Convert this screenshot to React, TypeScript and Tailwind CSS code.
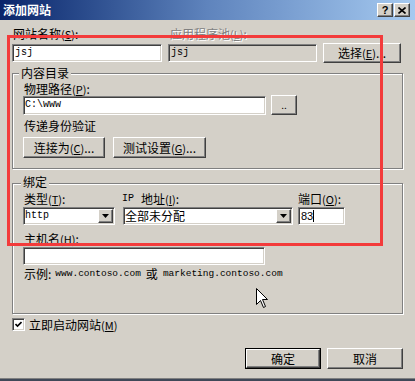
import React from "react";

const sunken =
  "border border-t-[#808080] border-l-[#808080] border-b-white border-r-white shadow-[inset_1px_1px_0_#404040,inset_-1px_-1px_0_#d4d0c8]";
const raised =
  "border border-t-white border-l-white border-b-[#404040] border-r-[#404040] shadow-[inset_-1px_-1px_0_#808080,inset_1px_1px_0_#d4d0c8] bg-[#d4d0c8] flex items-center justify-center";
const etched = "border border-[#808080] shadow-[inset_1px_1px_0_#fff,1px_1px_0_#fff]";
const mono = "font-['Liberation_Mono',monospace]";

function Acc({ k }: { k: string }) {
  return (
    <span className="text-[11px]">
      (<span className="underline">{k}</span>)
    </span>
  );
}

function Arrow() {
  return (
    <div className={`${raised} w-[15px] h-[14px]`}>
      <svg width="7" height="4" viewBox="0 0 7 4">
        <path d="M0 0 L7 0 L3.5 4 Z" fill="#000" />
      </svg>
    </div>
  );
}

export default function App() {
  return (
    <div className="relative w-[415px] h-[381px] bg-[#d4d0c8] overflow-hidden flex flex-col font-['Noto_Sans_CJK_SC',sans-serif] text-[12px] leading-[12px] text-black">
      {/* Title bar */}
      <div className="h-[20px] flex items-center bg-gradient-to-r from-[#0a246a] via-[#5f84bd] to-[#a6caf0] pl-[3px] pr-[5px]">
        <span className="text-white font-bold text-[12px] leading-[12px]">添加网站</span>
        <div className="flex-1" />
        <div className={`${raised} w-[16px] h-[14px] text-[11px] font-bold font-['Liberation_Sans',sans-serif]`}>?</div>
        <div className={`${raised} w-[16px] h-[14px] ml-[1px]`}>
          <svg width="8" height="7" viewBox="0 0 8 7">
            <path d="M0.5 0.5 L7.5 6.5 M7.5 0.5 L0.5 6.5" stroke="#000" strokeWidth="1.6" />
          </svg>
        </div>
      </div>

      <div className="flex-1 flex flex-col pl-[12px]">
        {/* labels */}
        <div className="mt-[8px] h-[12px] flex">
          <div className="w-[156px] pl-[1px]">
            网站名称<Acc k="S" />:
          </div>
          <div className="pl-[2px] text-[#808080] [text-shadow:1px_1px_0_#fff]">
            应用程序池<Acc k="L" />:
          </div>
        </div>
        {/* inputs */}
        <div className="mt-[3px] h-[20px] flex items-center">
          <div className={`${sunken} bg-white w-[150px] h-[18px] flex items-center pl-[2px] ${mono} text-[10px]`}>jsj</div>
          <div className={`${sunken} bg-[#d4d0c8] w-[149px] h-[18px] ml-[6px] flex items-center pl-[2px] ${mono} text-[10px]`}>jsj</div>
          <div className={`${raised} w-[78px] h-[20px] ml-[6px]`}>
            选择<Acc k="E" />...
          </div>
        </div>

        {/* Group 1 */}
        <div className={`${etched} relative mt-[10px] w-[391px] h-[96px] flex flex-col pl-[10px] pt-[9px]`}>
          <div className="absolute left-[6px] top-[-7px] px-[2px] bg-[#d4d0c8] leading-[12px]">内容目录</div>
          <div className="h-[12px] ml-[1px]">
            物理路径<Acc k="P" />:
          </div>
          <div className="h-[20px] flex items-center">
            <div className={`${sunken} bg-white w-[243px] h-[19px] flex items-center pl-[1px] ${mono} text-[10px]`}>C:\www</div>
            <div className={`${raised} w-[26px] h-[20px] ml-[5px] text-[10px]`}>..</div>
          </div>
          <div className="mt-[5px] h-[12px] ml-[1px]">传递身份验证</div>
          <div className="mt-[5px] h-[21px] flex">
            <div className={`${raised} w-[82px] h-[21px]`}>
              连接为<Acc k="C" />...
            </div>
            <div className={`${raised} w-[93px] h-[21px] ml-[8px]`}>
              测试设置<Acc k="G" />...
            </div>
          </div>
        </div>

        {/* Group 2 */}
        <div className={`${etched} relative mt-[14px] w-[391px] h-[131px] flex flex-col pl-[10px] pt-[9px]`}>
          <div className="absolute left-[8px] top-[-8px] px-[2px] bg-[#d4d0c8] leading-[12px]">绑定</div>
          <div className="flex">
            <div className="w-[92px] flex flex-col">
              <div className="h-[12px] ml-[1px]">
                类型<Acc k="T" />:
              </div>
              <div className={`${sunken} bg-white mt-[2px] h-[18px] flex items-center pl-[1px] pr-[1px] ${mono} text-[10px]`}>
                <span className="flex-1">http</span>
                <Arrow />
              </div>
            </div>
            <div className="w-[170px] ml-[8px] flex flex-col">
              <div className="h-[12px] ml-[-1px] flex">
                <span className="font-['Liberation_Mono',monospace] text-[10px]">IP</span>
                <span className="ml-[7px]">地址</span>
                <Acc k="I" />:
              </div>
              <div className={`${sunken} bg-white mt-[2px] h-[18px] flex items-center pl-[1px] pr-[1px]`}>
                <span className="flex-1">全部未分配</span>
                <Arrow />
              </div>
            </div>
            <div className="w-[47px] ml-[5px] flex flex-col">
              <div className="h-[12px]">
                端口<Acc k="O" />:
              </div>
              <div className={`${sunken} bg-white mt-[2px] h-[18px] flex items-center pl-[2px] font-['Liberation_Sans',sans-serif] text-[11px]`}>
                83<span className="w-[1px] h-[12px] bg-black" />
              </div>
            </div>
          </div>
          <div className="mt-[8px] h-[12px] ml-[1px]">
            主机名<Acc k="H" />:
          </div>
          <div className={`${sunken} bg-white mt-[2px] w-[242px] h-[18px]`} />
          <div className="mt-[3px] h-[12px] ml-[1px] flex items-center whitespace-pre">
            <span>示例:</span>
            <span className={`${mono} text-[9.5px] ml-[4px]`}>www.contoso.com</span>
            <span className="mx-[5px]">或</span>
            <span className={`${mono} text-[9.5px]`}>marketing.contoso.com</span>
          </div>
        </div>

        {/* checkbox */}
        <div className="mt-[4px] h-[13px] flex items-center">
          <div className={`${sunken} bg-white w-[13px] h-[13px] flex items-center justify-center`}>
            <svg width="7" height="7" viewBox="0 0 7 7">
              <path d="M0.5 3 L2.5 5 L6.5 1" stroke="#000" strokeWidth="1.6" fill="none" />
            </svg>
          </div>
          <span className="ml-[4px]">
            立即启动网站<Acc k="M" />
          </span>
        </div>

        {/* buttons */}
        <div className="mt-[17px] h-[21px] flex justify-end pr-[12px]">
          <div className="w-[76px] h-[21px] border border-black flex">
            <div className={`${raised} flex-1`}>确定</div>
          </div>
          <div className={`${raised} w-[76px] h-[21px] ml-[6px]`}>取消</div>
        </div>
        <div className="flex-1" />
      </div>
      <div className="h-[1px] bg-[#808080]" />
      <div className="h-[2px] bg-[#404858]" />

      {/* red annotation */}
      <div className="absolute left-[7px] top-[35px] w-[376px] h-[211px] border-[3px] border-[#f33b3b] pointer-events-none" />

      {/* mouse cursor */}
      <svg className="absolute left-[256px] top-[288px]" width="13" height="21" viewBox="0 0 13 21">
        <path d="M0.5 0.5 L0.5 16.5 L4.5 12.5 L7.5 19.5 L9.5 18.5 L6.5 11.5 L11.5 11.5 Z" fill="#fff" stroke="#000" strokeWidth="1" />
      </svg>
    </div>
  );
}
